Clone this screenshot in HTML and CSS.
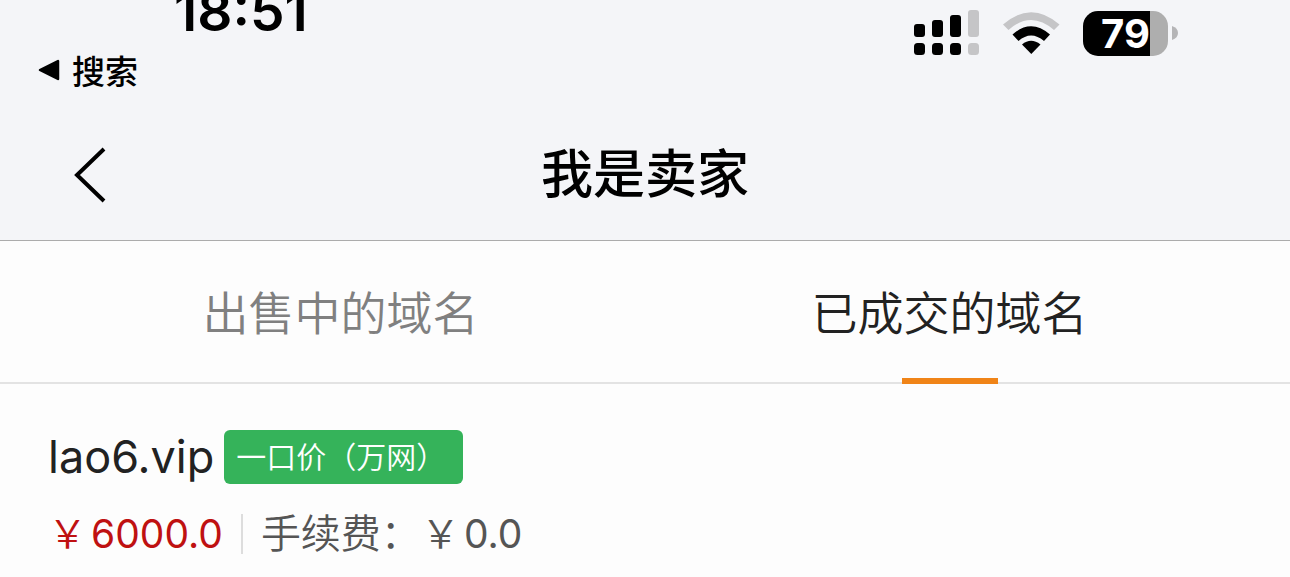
FILE: index.html
```
<!DOCTYPE html>
<html lang="zh-CN">
<head>
  <meta charset="UTF-8">
  <meta name="viewport" content="width=device-width, initial-scale=1.0">
  <title>我是卖家</title>
  <link rel="stylesheet" href="styles.css">
</head>
<body>

  <header class="header">
    <div class="status-bar">
      <div class="time">18:51</div>
      <div class="status-icons">
        <svg class="signal" width="66" height="46" viewBox="0 0 66 46">
          <rect x="0" y="14" width="11" height="13" rx="3"/>
          <rect x="18" y="10" width="11" height="17" rx="3"/>
          <rect x="36" y="5" width="11" height="22" rx="3"/>
          <rect x="54" y="0" width="11" height="27" rx="3" fill="#c5c5c7"/>
          <rect x="0" y="33" width="11" height="12" rx="3.5"/>
          <rect x="18" y="33" width="11" height="12" rx="3.5"/>
          <rect x="36" y="33" width="11" height="12" rx="3.5"/>
          <rect x="54" y="33" width="11" height="12" rx="3.5" fill="#c5c5c7"/>
        </svg>
        <svg class="wifi" width="58" height="46" viewBox="0 0 58 46">
          <path d="M0 14.500 Q28 -10 56.500 14.500 L51 20 Q28 0 5.500 20 Z" fill="#c5c5c7"/>
          <path d="M9.500 24.500 Q28 8 47 24.500 L41 31 Q28 20 15.500 31 Z"/>
          <path d="M19 34.500 Q28 27 37.500 34.500 L28.300 44 Z"/>
        </svg>
        <div class="battery">
          <span class="battery-level">79</span>
          <svg width="6" height="14" viewBox="0 0 6 14"><path d="M0 0 Q6 2 6 7 Q6 12 0 14 Z" fill="#b5b5b7"/></svg>
        </div>
      </div>
    </div>

    <a class="back-app" href="#">
      <svg width="22" height="22" viewBox="0 0 22 22"><path d="M2 11 L20 2 V20 Z" stroke="#000" stroke-width="2.500" stroke-linejoin="round"/></svg>
      搜索
    </a>

    <div class="nav-bar">
      <button class="back-button" aria-label="返回">
        <svg width="32" height="56" viewBox="0 0 32 56"><path d="M30 2 L3 28 L30 54" fill="none" stroke="#000" stroke-width="4"/></svg>
      </button>
      <h1 class="title">我是卖家</h1>
    </div>
  </header>

  <nav class="tabs">
    <button class="tab">出售中的域名</button>
    <button class="tab active">已成交的域名</button>
  </nav>

  <main class="domain-item">
    <div class="domain-row">
      <span class="domain-name">lao6.vip</span>
      <span class="badge">一口价（万网）</span>
    </div>
    <div class="price-row">
      <span class="price"><span class="yen">￥</span>6000.0</span>
      <span class="fee"><span class="fee-label">手续费：</span><span class="yen">￥</span>0.0</span>
    </div>
  </main>

</body>
</html>
```
FILE: styles.css
```
* {
  box-sizing: border-box;
}

body {
  margin: 0;
  font-family: Inter, "Noto Sans CJK SC", sans-serif;
  background-color: #fdfdfd;
  color: #222;
}

button {
  padding: 0;
  border: none;
  background: none;
  font-family: inherit;
  cursor: pointer;
}

svg {
  display: block;
}

.header {
  background-color: #f4f5f8;
  border-bottom: 1px solid #acacac;
  color: #000;
}

.status-bar {
  display: flex;
  justify-content: space-between;
  align-items: flex-end;
  height: 56px;
  padding: 0 112px 0 174px;
  overflow: hidden;
}

.time {
  padding-bottom: 19px;
  font-size: 55px;
  font-weight: 600;
  line-height: 52px;
}

.status-icons {
  display: flex;
  align-items: center;
}

.wifi {
  margin: 0 22px 0 23px;
}

.battery {
  display: flex;
  align-items: center;
  gap: 4px;
}

.battery-level {
  width: 85px;
  border-radius: 15px;
  background: linear-gradient(to right, #000 67px, #aeaeae 67px);
  color: #fff;
  font-size: 40px;
  font-weight: 700;
  line-height: 45px;
  text-align: center;
}

.back-app {
  display: flex;
  align-items: center;
  gap: 12px;
  width: max-content;
  height: 28px;
  margin-left: 38px;
  color: #000;
  font-size: 33px;
  font-weight: 500;
  text-decoration: none;
}

.nav-bar {
  display: grid;
  grid-template-columns: 1fr auto 1fr;
  align-items: center;
  height: 156px;
  padding: 26px 74px 0;
}

.back-button {
  justify-self: start;
}

.title {
  margin: 0;
  font-size: 52px;
  font-weight: 500;
  line-height: 60px;
}

.tabs {
  display: flex;
  height: 143px;
  padding: 0 36px;
  border-bottom: 2px solid #e3e3e3;
}

.tab {
  position: relative;
  flex: 1;
  padding-bottom: 4px;
  color: #808080;
  font-size: 46px;
  font-weight: 350;
}

.tab.active {
  color: #222;
}

.tab.active::after {
  content: "";
  position: absolute;
  bottom: -2px;
  left: 50%;
  width: 96px;
  height: 6px;
  margin-left: -48px;
  background-color: #f08418;
}

.domain-item {
  padding: 46px 48px 0;
}

.domain-row {
  display: flex;
  align-items: center;
  gap: 10px;
}

.domain-name {
  font-size: 45px;
  line-height: 54px;
}

.badge {
  padding: 0 17px 0 12px;
  border-radius: 6px;
  background-color: #35b35a;
  color: #fff;
  font-size: 30px;
  font-weight: 350;
  line-height: 54px;
}

.price-row {
  display: flex;
  align-items: center;
  margin-top: 30px;
  font-size: 39px;
  line-height: 40px;
}

.yen {
  margin-right: 4px;
  font-weight: 350;
}

.price {
  padding-right: 18px;
  border-right: 2px solid #ddd;
  color: #bf1111;
}

.fee {
  padding-left: 18px;
  color: #555;
}

.fee-label {
  font-size: 40px;
  font-weight: 350;
}
```
